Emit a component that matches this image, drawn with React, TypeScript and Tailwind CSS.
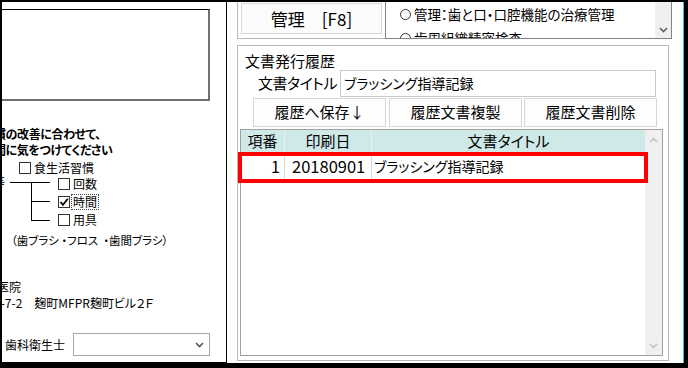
import React from "react";

const font = "[font-family:'Noto_Sans_CJK_JP',sans-serif] [font-feature-settings:'palt']";

function Check({ checked = false }: { checked?: boolean }) {
  return (
    <span className="w-[12px] h-[12px] border border-[#333] bg-white flex items-center justify-center shrink-0">
      {checked && (
        <svg width="10" height="10" viewBox="0 0 10 10">
          <path d="M1.5 5 L4 7.8 L8.8 1.8" stroke="#000" strokeWidth="1.8" fill="none" />
        </svg>
      )}
    </span>
  );
}

function Radio({ label }: { label: string }) {
  return (
    <div className="h-[24px] flex items-center gap-[3px] whitespace-nowrap shrink-0">
      <span className="w-[11px] h-[11px] rounded-full border border-[#333] bg-white shrink-0" />
      <span className="text-[13.5px] leading-[16px]">{label}</span>
    </div>
  );
}

function Chevron({ up = false, color }: { up?: boolean; color: string }) {
  return (
    <svg width="9" height="6" viewBox="0 0 9 6">
      <path d={up ? "M1 5 L4.5 1.5 L8 5" : "M1 1 L4.5 4.5 L8 1"} stroke={color} strokeWidth="1.6" fill="none" />
    </svg>
  );
}

function Btn({ label, className = "" }: { label: string; className?: string }) {
  return (
    <div
      className={`w-[133px] h-full border border-[#d6d6d6] bg-[#fdfdfd] flex items-center justify-center text-[15px] ${className}`}
    >
      {label}
    </div>
  );
}

export default function App() {
  return (
    <div className={`w-[688px] h-[368px] bg-black pt-[2px] pl-[2px] pr-[4px] pb-[5px] flex overflow-hidden text-black ${font}`}>
      <div className="flex-1 flex bg-white border-r border-[#4fb3e6]">
        {/* left panel */}
        <div className="w-[225px] shrink-0 border-r border-b border-black flex flex-col overflow-hidden">
          <div className="mt-[7px] h-[92px] w-[208px] border-t border-t-black border-r-2 border-b-2 border-r-[#707070] border-b-[#707070] bg-white shrink-0" />
          <div className="mt-[25px] ml-[-8px] text-[12px] leading-[16px] font-semibold tracking-[-0.4px] whitespace-nowrap">
            慣の改善に合わせて、
          </div>
          <div className="ml-[-8px] text-[12px] leading-[16px] font-semibold tracking-[-0.4px] whitespace-nowrap">
            間に気をつけてください
          </div>
          <div className="mt-[3px] h-[14px] flex items-center gap-[3px] pl-[17px] text-[12px]">
            <Check />
            <span>食生活習慣</span>
          </div>
          <div className="flex">
            <div className="w-[56px] flex items-start shrink-0">
              <span className="ml-[-9px] w-[12px] shrink-0 text-[12px] leading-[14px]">等</span>
              <svg width="53" height="54" viewBox="0 0 53 54">
                <path d="M5 7.5 H45 M26.5 7 V45.5 M26 26.5 H45 M26 45.5 H45" stroke="#000" strokeWidth="1" fill="none" />
              </svg>
            </div>
            <div className="flex flex-col text-[12px]">
              <div className="h-[18px] flex items-center gap-[3px]">
                <Check />
                <span>回数</span>
              </div>
              <div className="h-[18px] flex items-center gap-[2px]">
                <Check checked />
                <span className="outline-1 outline-dotted outline-[#444] px-[1px] leading-[14px]">時間</span>
              </div>
              <div className="h-[18px] flex items-center gap-[3px]">
                <Check />
                <span>用具</span>
              </div>
            </div>
          </div>
          <div className="mt-[3px] ml-[9px] text-[11.5px] leading-[16px] whitespace-pre">
            （歯ブラシ ・フロス  ・歯間ブラシ）
          </div>
          <div className="mt-[31px] ml-[-5px] text-[12px] leading-[16px] whitespace-nowrap">医院</div>
          <div className="ml-[-8px] text-[12px] leading-[16px] whitespace-pre">3-7-2　麹町MFPR麹町ビル２Ｆ</div>
          <div className="mt-[22px] h-[23px] flex items-center shrink-0">
            <span className="pl-[3px] w-[71px] text-[12px]">歯科衛生士</span>
            <div className="w-[137px] h-[23px] border border-[#a8a8a8] bg-white flex items-center justify-end pr-[5px]">
              <Chevron color="#555" />
            </div>
          </div>
        </div>

        {/* right panel */}
        <div className="flex-1 flex flex-col overflow-hidden">
          <div className="flex h-[37px] pl-[10px] shrink-0">
            <div className="w-[148px] h-full border-l border-b border-[#b8b8b8] pl-[3px]">
              <div className="mt-[1px] h-[31px] w-[141px] border border-[#d8d8d8] bg-[#fcfcfc] flex items-center justify-center text-[17px] whitespace-pre">
                管理　[F8]
              </div>
            </div>
            <div className="w-[287px] h-full border-l border-r border-b border-[#828282] flex overflow-hidden">
              <div className="flex-1 flex flex-col pl-[14px] overflow-hidden">
                <Radio label="管理：歯と口・口腔機能の治療管理" />
                <Radio label="歯周組織精密検査" />
              </div>
              <div className="w-[16px] bg-[#f0f0f0] flex flex-col justify-end items-center pb-[5px]">
                <Chevron color="#606060" />
              </div>
            </div>
          </div>

          <div className="mt-[6px] ml-[10px] w-[432px] h-[316px] border border-[#b8b8b8] flex flex-col shrink-0">
            <div className="pl-[7px] mt-[7px] text-[15px] leading-[16px]">文書発行履歴</div>
            <div className="mt-[1px] flex items-center h-[27px]">
              <span className="pl-[20px] w-[102px] text-[15px] tracking-[-0.5px]">文書タイトル</span>
              <div className="w-[316px] h-[27px] border border-[#c8c8c8] px-[3px] flex items-center text-[14px]">
                ブラッシング指導記録
              </div>
            </div>
            <div className="mt-[1px] flex h-[29px] pl-[15px]">
              <Btn label="履歴へ保存↓" />
              <Btn label="履歴文書複製" className="ml-[3px]" />
              <Btn label="履歴文書削除" className="ml-[2px]" />
            </div>
            <div className="mt-[2px] ml-[2px] w-[423px] h-[227px] border border-[#a0a0a0] relative flex">
              <div className="flex-1 flex flex-col">
                <div className="h-[22px] bg-[#cfe8e8] flex text-[15px] leading-[22px]">
                  <div className="w-[44px] border-r border-[#eaf3f3] text-center">項番</div>
                  <div className="w-[87px] border-r border-[#eaf3f3] text-center">印刷日</div>
                  <div className="flex-1 text-center">文書タイトル</div>
                </div>
                <div className="h-[29px] flex leading-[29px]">
                  <div className="w-[44px] border-r border-[#d9d9d9] text-right pr-[4px] text-[16px]">1</div>
                  <div className="w-[87px] border-r border-[#d9d9d9] pl-[7px] text-[16.5px]">20180901</div>
                  <div className="flex-1 pl-[2px] text-[14px]">ブラッシング指導記録</div>
                </div>
              </div>
              <div className="w-[17px] bg-[#f0f0f0] flex flex-col justify-between items-center pt-[7px] pb-[6px]">
                <Chevron up color="#c4c4c4" />
                <Chevron color="#c4c4c4" />
              </div>
              <div className="absolute left-[-3px] top-[22px] w-[410px] h-[31px] border-4 border-[#ff0000]" />
            </div>
          </div>
        </div>
      </div>
    </div>
  );
}
